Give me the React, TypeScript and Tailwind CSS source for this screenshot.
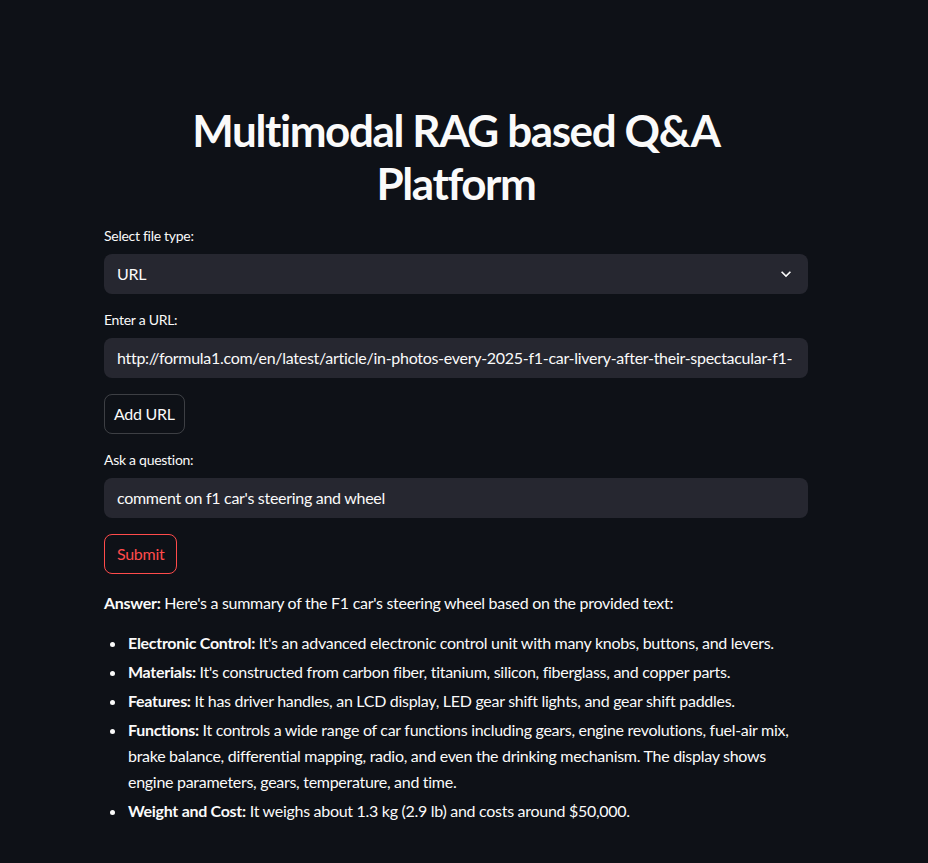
import React from "react";

const font = { fontFamily: "Lato, 'Noto Sans', sans-serif" };

function Label({ text }: { text: string }) {
  return <div className="text-[14px] leading-[20px] text-[#fafafa] mb-[8px] tracking-[-0.02em]">{text}</div>;
}

function Field({ value, chevron }: { value: string; chevron?: boolean }) {
  return (
    <div className="flex items-center h-10 rounded-lg bg-[#262730] pl-[13px] pr-4 text-[16px] text-[#fafafa] overflow-hidden whitespace-nowrap">
      <span className="flex-1 overflow-hidden">{value}</span>
      {chevron && (
        <svg width="20" height="20" viewBox="0 0 24 24" fill="#fafafa" className="shrink-0 -mr-1">
          <path d="M7.41 8.59L12 13.17l4.59-4.58L18 10l-6 6-6-6 1.41-1.41z" />
        </svg>
      )}
    </div>
  );
}

const items = [
  ["Electronic Control:", "It's an advanced electronic control unit with many knobs, buttons, and levers."],
  ["Materials:", "It's constructed from carbon fiber, titanium, silicon, fiberglass, and copper parts."],
  ["Features:", "It has driver handles, an LCD display, LED gear shift lights, and gear shift paddles."],
  ["Functions:", "It controls a wide range of car functions including gears, engine revolutions, fuel-air mix, brake balance, differential mapping, radio, and even the drinking mechanism. The display shows engine parameters, gears, temperature, and time."],
  ["Weight and Cost:", "It weighs about 1.3 kg (2.9 lb) and costs around $50,000."],
];

export default function App() {
  return (
    <div className="min-h-[863px] bg-[#0e1117] text-[#fafafa] tracking-[-0.018em]" style={font}>
      <div className="w-[912px] flex justify-center">
        <main className="w-[704px] pt-[104px] pb-10">
          <h1 className="text-[44px] leading-[53px] font-bold text-center mb-[16px] tracking-[-0.032em]">
            Multimodal RAG based Q&amp;A
            <br />
            Platform
          </h1>

          <Label text="Select file type:" />
          <Field value="URL" chevron />

          <div className="mt-4">
            <Label text="Enter a URL:" />
            <Field value="http://formula1.com/en/latest/article/in-photos-every-2025-f1-car-livery-after-their-spectacular-f1-75-launch" />
          </div>

          <button className="mt-4 h-10 px-[9px] rounded-lg border border-[#fafafa]/20 text-[16px] text-[#fafafa]">
            Add URL
          </button>

          <div className="mt-4">
            <Label text="Ask a question:" />
            <Field value="comment on f1 car's steering and wheel" />
          </div>

          <button className="mt-4 h-10 px-3 rounded-lg border border-[#ff4b4b] text-[16px] text-[#ff4b4b]">
            Submit
          </button>

          <div className="mt-[16px] text-[16px] leading-[26px]">
            <p>
              <strong>Answer:</strong> Here's a summary of the F1 car's steering wheel based on the provided text:
            </p>
            <ul className="list-disc pl-[23px] mt-[14px]">
              {items.map(([head, body]) => (
                <li key={head} className="mb-[3px] pl-[1px]">
                  <strong>{head}</strong> {body}
                </li>
              ))}
            </ul>
          </div>
        </main>
      </div>
    </div>
  );
}
